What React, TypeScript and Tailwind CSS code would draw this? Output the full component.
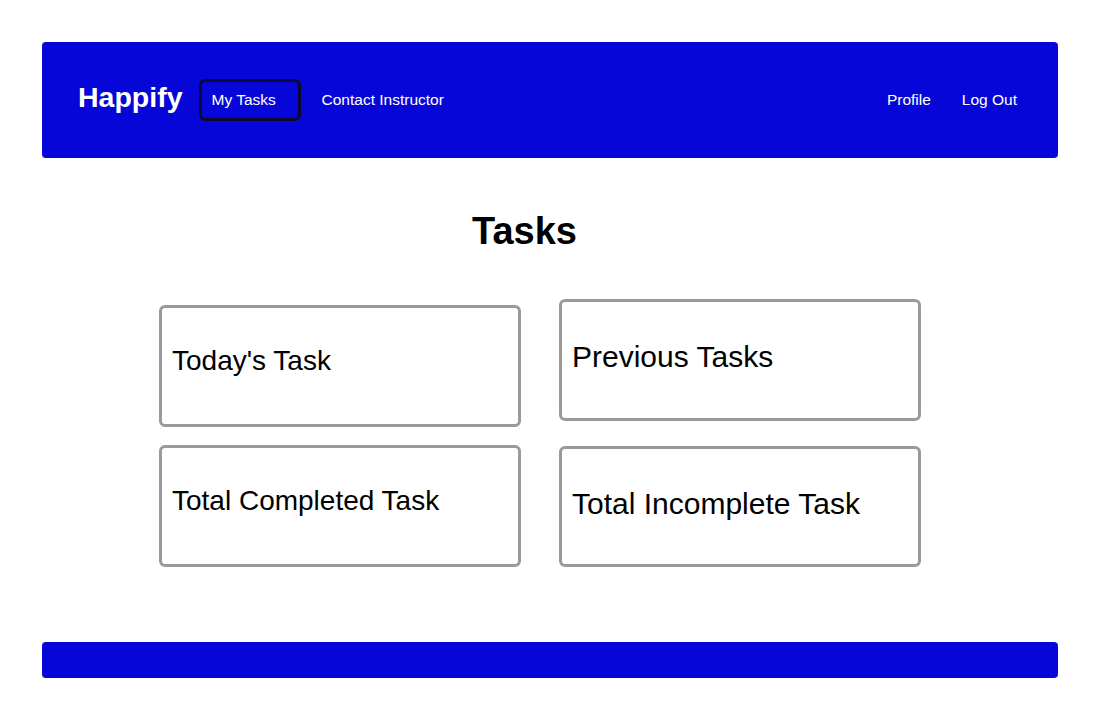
export default function App() {
  const font = { fontFamily: '"Liberation Sans", Arial, sans-serif' };
  return (
    <div className="min-h-[720px] w-[1100px] bg-white px-[42px] pt-[42px] text-black" style={font}>
      <nav className="flex h-[116px] items-center rounded-[4px] bg-[#0606d8] pl-[36px] pr-[41px] text-white">
        <span className="pb-[6px] text-[28.5px] font-bold leading-none">Happify</span>
        <span className="ml-[16px] flex h-[42px] w-[102px] items-center rounded-[6px] border-[3px] border-[#0a0a30] pl-[10px] text-[15.5px]">
          My Tasks
        </span>
        <span className="ml-[21px] text-[15.5px]">Contact Instructor</span>
        <div className="ml-auto flex items-center gap-[31px] text-[15.5px]">
          <span>Profile</span>
          <span>Log Out</span>
        </div>
      </nav>

      <h1 className="mt-[51px] pr-[51px] text-center text-[38px] font-bold leading-[44px]">Tasks</h1>

      <div className="ml-[117px] mt-[46px] grid w-[762px] grid-cols-[362px_362px] items-start gap-x-[38px] gap-y-[18px]">
        <div className="mt-[6px] flex h-[122px] items-center rounded-[6px] border-[3px] border-[#9a9a9a] pb-[10px] pl-[10px] text-[28px]">
          Today's Task
        </div>
        <div className="flex h-[122px] items-center rounded-[6px] border-[3px] border-[#9a9a9a] pb-[8px] pl-[10px] text-[30px]">
          Previous Tasks
        </div>
        <div className="flex h-[122px] items-center rounded-[6px] border-[3px] border-[#9a9a9a] pb-[10px] pl-[10px] text-[28px]">
          Total Completed Task
        </div>
        <div className="mt-[1px] flex h-[121px] items-center rounded-[6px] border-[3px] border-[#9a9a9a] pb-[7px] pl-[10px] text-[30px]">
          Total Incomplete Task
        </div>
      </div>

      <footer className="mt-[75px] h-[36px] rounded-[4px] bg-[#0606d8]" />
    </div>
  );
}
